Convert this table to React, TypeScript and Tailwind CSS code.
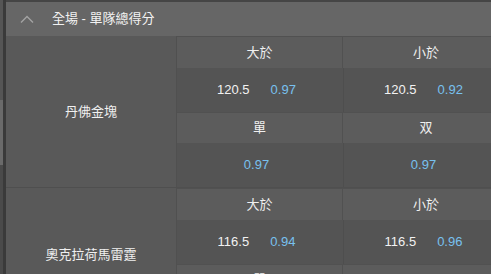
import React, { FC } from "react";

interface IMarket {
  left: string;
  right: string;
  leftLine?: string;
  leftOdds: string;
  rightLine?: string;
  rightOdds: string;
}

interface ITeam {
  name: string;
  markets: IMarket[];
}

const teams: ITeam[] = [
  {
    name: "丹佛金塊",
    markets: [
      { left: "大於", right: "小於", leftLine: "120.5", leftOdds: "0.97", rightLine: "120.5", rightOdds: "0.92" },
      { left: "單", right: "双", leftOdds: "0.97", rightOdds: "0.97" },
    ],
  },
  {
    name: "奧克拉荷馬雷霆",
    markets: [
      { left: "大於", right: "小於", leftLine: "116.5", leftOdds: "0.94", rightLine: "116.5", rightOdds: "0.96" },
      { left: "單", right: "双", leftOdds: "0.97", rightOdds: "0.97" },
    ],
  },
];

const Price: FC<{ line?: string; odds: string }> = ({ line, odds }) => (
  <div className="w-[166px] h-[44px] flex items-center justify-center gap-[21px] pr-[7px] text-[13px]">
    {line && <span className="text-[#f2f2f2]">{line}</span>}
    <span className="text-[#78c1ef]">{odds}</span>
  </div>
);

const MarketBlock: FC<{ market: IMarket; first: boolean }> = ({ market, first }) => (
  <div className="flex flex-col shrink-0">
    <div
      className={`flex shrink-0 ${first ? "h-[32px]" : "h-[31px]"} border-t border-[#515151] bg-[#5c5c5c] text-[13px] text-[#f0f0f0]`}
    >
      <div className="w-[166px] flex items-center justify-center border-r border-[#515151]">{market.left}</div>
      <div className="w-[166px] flex items-center justify-center">{market.right}</div>
    </div>
    <div className="flex shrink-0 bg-[#545454]">
      <div className="border-r border-[#4e4e4e]">
        <Price line={market.leftLine} odds={market.leftOdds} />
      </div>
      <Price line={market.rightLine} odds={market.rightOdds} />
    </div>
  </div>
);

const TeamRow: FC<{ team: ITeam; last: boolean }> = ({ team, last }) => (
  <div className={`flex shrink-0 ${last ? "" : "border-b border-[#4f4f4f]"}`}>
    <div className="w-[171px] shrink-0 flex items-center justify-center border-r border-[#505050] bg-[#595959] text-[13px] text-[#f0f0f0]">
      <span className={last ? "mt-[-18px]" : ""}>{team.name}</span>
    </div>
    <div className="flex flex-col shrink-0">
      {team.markets.map((market, index) => (
        <MarketBlock key={index} market={market} first={index === 0} />
      ))}
    </div>
  </div>
);

const App: FC = () => (
  <div className="w-[491px] h-[274px] overflow-hidden flex bg-[#555555] font-['Liberation_Sans','Noto_Sans_CJK_TC',sans-serif]">
    {/* page edge behind the panel */}
    <div className="w-[3px] shrink-0 flex flex-col">
      <div className="h-[100px] shrink-0 bg-[#555555]" />
      <div className="h-[65px] shrink-0 bg-[#6a6a6a]" />
      <div className="flex-1 bg-[#4a4a4a]" />
    </div>
    <div className="w-[3px] shrink-0 bg-[#3a3a3a]" />

    <div className="shrink-0 w-[510px]">
      <div className="h-[2px] bg-[#454545]" />
      <div className="h-[34px] flex items-center bg-[#666666]">
        <svg className="ml-[14px]" width="14" height="8" viewBox="0 0 14 8" fill="none">
          <polyline points="1,7.5 7,1.5 13,7.5" stroke="#a3a3a3" strokeWidth="1.4" />
        </svg>
        <span className="ml-[18px] text-[13px] text-[#f2f2f2]">全場 - 單隊總得分</span>
      </div>
      {teams.map((team, index) => (
        <TeamRow key={index} team={team} last={index === teams.length - 1} />
      ))}
    </div>
  </div>
);

export default App;
